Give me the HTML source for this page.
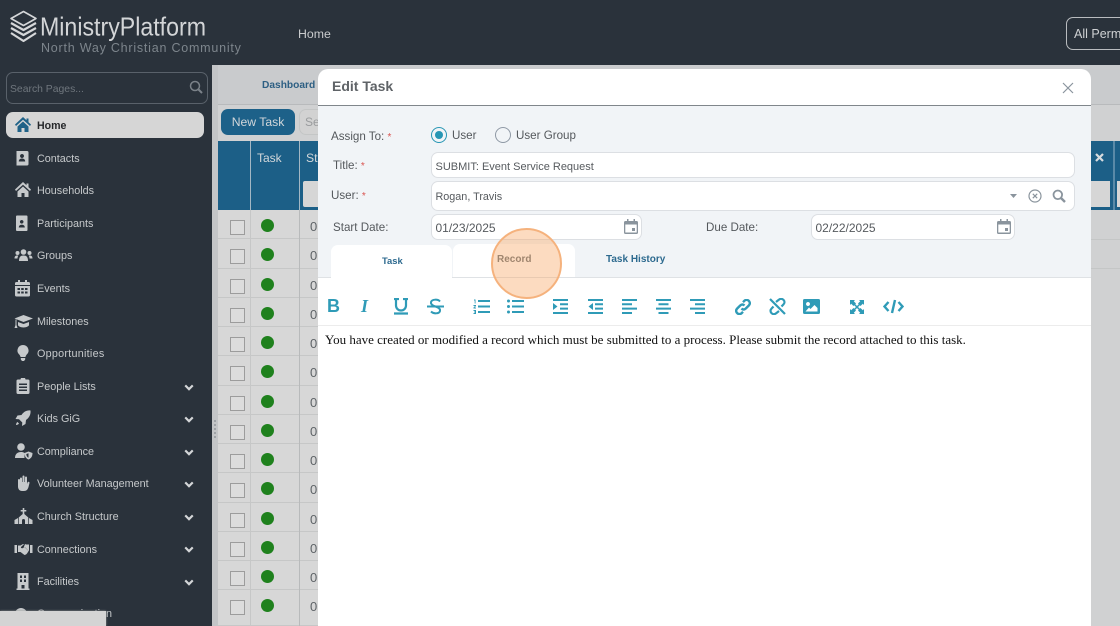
<!DOCTYPE html>
<html><head><meta charset="utf-8"><title>Edit Task</title>
<style>
html,body{margin:0;padding:0}
body{width:1120px;height:626px;overflow:hidden;position:relative;background:#2a323b;font-family:"Liberation Sans",sans-serif;color:#555}
*{box-sizing:border-box}
.a{position:absolute;white-space:nowrap}
.n{position:absolute;left:37px;font-size:10.800px;line-height:16px;color:#c6c9cb;white-space:nowrap;margin-top:1px}
.i{position:absolute;left:14px;width:18px;height:18px;fill:#c6c9cb;margin-top:-1px}
.c{position:absolute;left:184px;width:10px;height:7px;fill:none;stroke:#d4d6d8;stroke-width:2.600}
.r{position:absolute;left:218px;width:100px;height:29.250px;border-bottom:1px solid #c6c7c7;background:#d7d7d7}
.r b{position:absolute;left:11.500px;top:10px;width:15px;height:15px;border:1.500px solid #9c9c9c;background:#dcdcdc}
.r i{position:absolute;left:43px;top:9px;width:13px;height:13px;border-radius:50%;background:#1f811d}
.r u{position:absolute;left:92px;top:9px;font-size:13px;line-height:16px;color:#5f6468;text-decoration:none}
.l{font-size:11.600px;line-height:16px;color:#54585c}
.s{color:#d9534f;font-size:10px}
.f{position:absolute;background:#fff;border:1px solid #dcdfe3;border-radius:7px;font-size:11px;color:#565a5e;line-height:16px;padding-left:3.500px;white-space:nowrap}
.o{fill:none;stroke:#2f9bb7;stroke-width:2}
</style></head><body>

<svg class="a" style="left:9px;top:10px" width="30" height="34" viewBox="0 0 30 34" fill="none" stroke="#d5d7d9" stroke-width="1.600" stroke-linejoin="round"><path d="M14.500 1.500 27 8.500 14.500 15.500 2 8.500Z"/><path d="M2 13 14.500 20 27 13M2 18 14.500 25 27 18M2 23 14.500 31 27 23" stroke-width="2.200"/></svg>
<svg class="a" style="left:40px;top:10px" width="170" height="32"><text x="0" y="25.500" font-family="Liberation Sans" font-size="26" fill="#d3d5d7" textLength="166" lengthAdjust="spacingAndGlyphs">MinistryPlatform</text></svg>
<div class="a" style="left:41px;top:41px;font-size:12.500px;line-height:15px;letter-spacing:.78px;color:#7d858c">North Way Christian Community</div>
<div class="a" style="left:298px;top:26px;font-size:12.300px;line-height:17px;color:#c9cbcd">Home</div>
<div class="a" style="left:1066px;top:17px;width:70px;height:33px;border:1px solid #b9bcbf;border-radius:7px;color:#cfd1d3;font-size:12.500px;line-height:32px;padding-left:7px">All Perm</div>

<div class="a" style="left:6px;top:72px;width:202px;height:32px;border:1px solid #59616a;border-radius:7px;color:#6f767d;font-size:10.400px;line-height:33px;padding-left:3px">Search Pages...</div>
<svg class="a" style="left:189px;top:80px" width="14" height="14" fill="none" stroke="#7b8289" stroke-width="1.500"><circle cx="6" cy="6" r="4.500"/><path d="M9.500 9.500 13 13" stroke-width="2"/></svg>

<div class="a" style="left:6px;top:112px;width:198px;height:26px;border-radius:7px;background:#d6d6d6"></div>
<svg class="i" style="top:117px;fill:#1f6288" viewBox="0 0 18 18"><path d="M9 1 1 8.500 2 10l7-6.300L16 10l1-1.500-2.500-2.300V2.500h-2v1.800ZM3.500 10.500 9 5.500l5.500 5V16h-4v-4h-3v4h-4Z"/></svg>
<div class="n" style="top:117px;color:#26282b;font-weight:bold;font-size:10.600px">Home</div>

<svg class="i" style="top:150px" viewBox="0 0 18 18"><path d="M2.500 2h10.500a1.500 1.500 0 0 1 1.500 1.500V15a1.500 1.500 0 0 1-1.500 1.500H2.500ZM8 5a2 2 0 1 0 .01 0ZM4.800 12.500h6.400c0-2-1.400-3-3.200-3s-3.200 1-3.200 3Z" fill-rule="evenodd"/></svg>
<div class="n" style="top:150px">Contacts</div>
<svg class="i" style="top:182px" viewBox="0 0 18 18"><path d="M9 1 1 8.500 2 10l7-6.300L16 10l1-1.500-2.500-2.300V2.500h-2v1.800ZM3.500 10.500 9 5.500l5.500 5V16h-4v-4h-3v4h-4Z"/></svg>
<div class="n" style="top:182px">Households</div>
<svg class="i" style="top:215px" viewBox="0 0 18 18"><path d="M3 1.500h9.500a1 1 0 0 1 1 1V16a1 1 0 0 1-1 1H3a1 1 0 0 1-1-1V2.500a1 1 0 0 1 1-1ZM7.700 6a1.800 1.800 0 1 0 .01 0ZM4.800 13.500h6c0-1.800-1.300-2.700-3-2.700s-3 .9-3 2.700Z" fill-rule="evenodd"/></svg>
<div class="n" style="top:215px">Participants</div>
<svg class="i" style="top:247px;width:19px" viewBox="0 0 19 18"><circle cx="9.500" cy="6" r="2.800"/><circle cx="3.500" cy="7" r="2"/><circle cx="15.500" cy="7" r="2"/><path d="M5 15c0-4 1.500-5.500 4.500-5.500S14 11 14 15ZM.5 12.500c0-2 1-3 2.500-3h1.300C3.800 10.500 3.500 11.500 3.500 12.500ZM18.500 12.500c0-2-1-3-2.500-3h-1.300c.5 1 .8 2 .8 3Z"/></svg>
<div class="n" style="top:247px">Groups</div>
<svg class="i" style="top:280px" viewBox="0 0 18 18"><path d="M4 1h2v2h5V1h2v2h1.500A1.500 1.500 0 0 1 16 4.500V6H1V4.500A1.500 1.500 0 0 1 2.500 3H4ZM1 7h15v9a1.500 1.500 0 0 1-1.500 1.500h-12A1.500 1.500 0 0 1 1 16ZM3.500 9v2h2.500V9ZM7.200 9v2h2.500V9ZM11 9v2h2.500V9ZM3.500 12.500v2h2.500v-2ZM7.200 12.500v2h2.500v-2ZM11 12.500v2h2.500v-2Z" fill-rule="evenodd"/></svg>
<div class="n" style="top:280px">Events</div>
<svg class="i" style="top:313px;width:19px" viewBox="0 0 19 18"><path d="M9.500 3 19 6.500 9.500 10 .5 6.500ZM4 10l5.500 2 5.500-2v3c0 1-2.500 2.500-5.500 2.500S4 14 4 13ZM1.500 7.500h1V13l1 3h-3l1-3Z"/></svg>
<div class="n" style="top:313px">Milestones</div>
<svg class="i" style="top:345px" viewBox="0 0 18 18"><path d="M9 1a5.500 5.500 0 0 1 4 9.300c-.8.9-1.400 1.800-1.500 2.700h-5c-.1-.9-.7-1.800-1.500-2.700A5.500 5.500 0 0 1 9 1ZM6.800 14h4.400v1.500L10 17H8l-1.200-1.500Z"/></svg>
<div class="n" style="top:345px;letter-spacing:.25px">Opportunities</div>
<svg class="i" style="top:378px" viewBox="0 0 18 18"><path d="M7 1h4l.6 1.500H14a1.500 1.500 0 0 1 1.500 1.500v11.500A1.500 1.500 0 0 1 14 17H4a1.500 1.500 0 0 1-1.500-1.500V4A1.500 1.500 0 0 1 4 2.500h2.400ZM5 6.500V8h8V6.500ZM5 9.500V11h8V9.500ZM5 12.500V14h8v-1.500Z" fill-rule="evenodd"/></svg>
<div class="n" style="top:378px">People Lists</div>
<svg class="i" style="top:410px" viewBox="0 0 18 18"><path d="M16.500 1.500c.5 4-1.500 7.500-4.500 9.500l-.5 4-3.500 2 .3-3.500-3.300-3.300L1.500 10l2-3.500 4-.5c2-3 5-5 9-4.500ZM3.500 13c-1 .5-1.500 2-1.500 3 1 0 2.500-.5 3-1.500Z"/></svg>
<div class="n" style="top:410px">Kids GiG</div>
<svg class="i" style="top:443px;width:19px" viewBox="0 0 19 18"><circle cx="7" cy="5" r="3.800"/><path d="M1 16c0-4 2.500-6 6-6 1.500 0 2.500.3 3.500 1v5Z"/><path d="M14.500 9.500 18.500 11c0 3.500-1.500 5.500-4 6.500-2.500-1-4-3-4-6.500Zm0 1.800-2.200.8c.1 1.900 1 3 2.200 3.700Z" fill-rule="evenodd"/></svg>
<div class="n" style="top:443px">Compliance</div>
<svg class="i" style="top:475px" viewBox="0 0 18 18"><path d="M6 4.500a1 1 0 0 1 2 0V8h.5V2.500a1 1 0 0 1 2 0V8h.5V3.500a1 1 0 0 1 2 0V10l.5-1.500a1 1 0 0 1 2 .5L14.500 13c-.7 2.500-2 4-4.500 4H8c-2.500 0-4-2-4-4.500V6a1 1 0 0 1 2 0Z"/></svg>
<div class="n" style="top:475px">Volunteer Management</div>
<svg class="i" style="top:508px;width:19px" viewBox="0 0 19 18"><path d="M8.700 1h1.600v2h2v1.500h-2V7l4 3.500v6.500H11v-3.500a1.500 1.500 0 0 0-3 0V17H4.700v-6.500l4-3.500V4.500h-2V3h2ZM.5 17v-4l3.500-2v6ZM18.500 17v-4L15 11v6Z"/></svg>
<div class="n" style="top:508px">Church Structure</div>
<svg class="i" style="top:541px;width:19px" viewBox="0 0 19 18"><path d="M.5 5h2.500v8H.5ZM16 5h2.500v8H16ZM4 5.500h2.500L9 4l1 .3-3 2.700c-.5.800.8 1.800 2 1l1.500-1 4 4L14 12l-1 1.500-1 1-1.500.500L6.500 12H4ZM11 4l1 .500H15v6.800l-4.200-4.300-1 .2Z"/></svg>
<div class="n" style="top:541px">Connections</div>
<svg class="i" style="top:573px" viewBox="0 0 18 18"><path d="M3.500 1h11v15.500h1V18H2.500v-1.500h1ZM6 3.500V6h2V3.500ZM10 3.500V6h2V3.500ZM6 7.500V10h2V7.500ZM10 7.500V10h2V7.500ZM7.500 13v3.500h3V13Z" fill-rule="evenodd"/></svg>
<div class="n" style="top:573px">Facilities</div>
<div class="n" style="top:605px">Communication</div>
<div class="a" style="left:15px;top:608px;width:12px;height:12px;border-radius:50%;background:#c6c9cb"></div>

<svg class="c" style="top:384px" viewBox="0 0 12 8"><path d="M1.500 1.500 6 6l4.500-4.500"/></svg>
<svg class="c" style="top:416px" viewBox="0 0 12 8"><path d="M1.500 1.500 6 6l4.500-4.500"/></svg>
<svg class="c" style="top:449px" viewBox="0 0 12 8"><path d="M1.500 1.500 6 6l4.500-4.500"/></svg>
<svg class="c" style="top:481px" viewBox="0 0 12 8"><path d="M1.500 1.500 6 6l4.500-4.500"/></svg>
<svg class="c" style="top:514px" viewBox="0 0 12 8"><path d="M1.500 1.500 6 6l4.500-4.500"/></svg>
<svg class="c" style="top:546px" viewBox="0 0 12 8"><path d="M1.500 1.500 6 6l4.500-4.500"/></svg>
<svg class="c" style="top:579px" viewBox="0 0 12 8"><path d="M1.500 1.500 6 6l4.500-4.500"/></svg>
<div class="a" style="left:0;top:611px;width:106px;height:15px;background:#d4d4d4;box-shadow:0 0 2px #999"></div>

<!-- main -->
<div class="a" style="left:212px;top:65px;width:908px;height:561px;background:#d0d1d2"></div>
<div class="a" style="left:218px;top:65px;width:902px;height:39px;background:#c9cbcd"></div>
<div class="a" style="left:212px;top:65px;width:6px;height:561px;background:#c3c5c7"></div>
<div class="a" style="left:214px;top:420px;width:2px;height:18px;border-left:2px dotted #9ea2a6"></div>
<div class="a" style="left:218px;top:104px;width:902px;height:1px;background:#b8babc"></div>
<div class="a" style="left:262px;top:78px;font-size:10.200px;line-height:16px;font-weight:bold;color:#2d5f83">Dashboard</div>
<div class="a" style="left:221px;top:109px;width:74px;height:26px;border-radius:7px;background:#1d6189;color:#d2d7da;font-size:12.200px;line-height:26px;text-align:center">New Task</div>
<div class="a" style="left:299px;top:109px;width:30px;height:26px;border-radius:7px;border:1px solid #c4c6c6;background:#d2d2d2;color:#9a9c9e;font-size:12px;line-height:25px;padding-left:5px">Se</div>

<div class="a" style="left:218px;top:141px;width:902px;height:69px;background:#1c5f87"></div>
<div class="a" style="left:250px;top:141px;width:1px;height:69px;background:#a3b7c4"></div>
<div class="a" style="left:299px;top:141px;width:1px;height:69px;background:#a3b7c4"></div>
<div class="a" style="left:1113px;top:141px;width:2px;height:69px;background:#5a8aa8"></div>
<div class="a" style="left:257px;top:150px;font-size:12px;line-height:16px;color:#d2d7da">Task</div>
<div class="a" style="left:306px;top:150px;font-size:12.200px;line-height:16px;color:#d2d7da">St</div>
<div class="a" style="left:303px;top:181px;width:20px;height:26px;background:#d6d6d6;border-radius:2px"></div>
<div class="a" style="left:1091px;top:181px;width:19px;height:26px;background:#d6d6d6"></div>
<div class="a" style="left:1117px;top:181px;width:3px;height:26px;background:#d6d6d6"></div>
<svg class="a" style="left:1095px;top:153px" width="9" height="9" stroke="#d8dcdf" stroke-width="2.200"><path d="M1 1 8 8M8 1 1 8"/></svg>

<div class="r" style="top:210px"><b></b><i></i><u>0</u></div>
<div class="r" style="top:239.250px"><b></b><i></i><u>0</u></div>
<div class="r" style="top:268.500px"><b></b><i></i><u>0</u></div>
<div class="r" style="top:297.750px"><b></b><i></i><u>0</u></div>
<div class="r" style="top:327px"><b></b><i></i><u>0</u></div>
<div class="r" style="top:356.250px"><b></b><i></i><u>0</u></div>
<div class="r" style="top:385.500px"><b></b><i></i><u>0</u></div>
<div class="r" style="top:414.750px"><b></b><i></i><u>0</u></div>
<div class="r" style="top:444px"><b></b><i></i><u>0</u></div>
<div class="r" style="top:473.250px"><b></b><i></i><u>0</u></div>
<div class="r" style="top:502.500px"><b></b><i></i><u>0</u></div>
<div class="r" style="top:531.750px"><b></b><i></i><u>0</u></div>
<div class="r" style="top:561px"><b></b><i></i><u>0</u></div>
<div class="r" style="top:590.250px;height:36px"><b></b><i></i><u>0</u></div>
<div class="a" style="left:250px;top:210px;width:1px;height:416px;background:#c6c7c7"></div>
<div class="a" style="left:299px;top:210px;width:1px;height:416px;background:#b8babb"></div>
<div class="a" style="left:1091px;top:239px;width:29px;height:1px;background:#c4c6c6"></div>
<div class="a" style="left:1091px;top:268px;width:29px;height:1px;background:#c4c6c6"></div>

<!-- modal -->
<div class="a" style="left:318px;top:69px;width:773px;height:557px;background:#fff;border-radius:10px 10px 0 0"></div>
<div class="a" style="left:318px;top:105px;width:773px;height:173px;background:#f1f4f7;border-top:1px solid #80868b"></div>
<div class="a" style="left:332px;top:76px;font-size:14px;line-height:20px;font-weight:bold;color:#5f6367">Edit Task</div>
<svg class="a" style="left:1062px;top:82px" width="12" height="12" stroke="#8a949d" stroke-width="1.200"><path d="M1 1 11 11M11 1 1 11"/></svg>

<div class="a l" style="left:331px;top:129px">Assign To: <span class="s">*</span></div>
<div class="a l" style="left:333px;top:158px">Title: <span class="s">*</span></div>
<div class="a l" style="left:331px;top:188px">User: <span class="s">*</span></div>
<div class="a l" style="left:333px;top:220px">Start Date:</div>
<div class="a l" style="left:706px;top:220px">Due Date:</div>

<div class="a" style="left:431px;top:127px;width:16px;height:16px;border-radius:50%;border:1.500px solid #2796b4"></div>
<div class="a" style="left:435px;top:131px;width:8px;height:8px;border-radius:50%;background:#2796b4"></div>
<div class="a l" style="left:452px;top:128px">User</div>
<div class="a" style="left:495px;top:127px;width:16px;height:16px;border-radius:50%;border:1.500px solid #8f99a5"></div>
<div class="a l" style="left:516px;top:128px">User Group</div>

<div class="f" style="left:431px;top:152px;width:644px;height:26px;line-height:28px">SUBMIT: Event Service Request</div>
<div class="f" style="left:431px;top:181px;width:644px;height:30px;line-height:31px;font-size:10.800px">Rogan, Travis</div>
<div class="f" style="left:431px;top:214px;width:211px;height:26px;line-height:27px;font-size:12px">01/23/2025</div>
<div class="f" style="left:811px;top:214px;width:204px;height:26px;line-height:27px;font-size:12px">02/22/2025</div>
<svg class="a" style="left:1010px;top:194px" width="7" height="4" fill="#8a949d"><path d="M0 0h7L3.500 4Z"/></svg>
<svg class="a" style="left:1028px;top:189px" width="14" height="14" fill="none" stroke="#8a949d" stroke-width="1.200"><circle cx="7" cy="7" r="6"/><path d="M4.800 4.800 9.200 9.200M9.200 4.800 4.800 9.200"/></svg>
<svg class="a" style="left:1052px;top:189px" width="14" height="14" fill="none" stroke="#8a949d" stroke-width="1.800"><circle cx="5.800" cy="5.800" r="4.300"/><path d="M9 9 13 13" stroke-width="2.400"/></svg>
<svg class="a" style="left:624px;top:219px" width="14" height="15" fill="#8a949d"><path d="M3 0h1.500v2h5V0H11v2h1.500A1.500 1.500 0 0 1 14 3.500v10a1.500 1.500 0 0 1-1.500 1.500h-11A1.500 1.500 0 0 1 0 13.500v-10A1.500 1.500 0 0 1 1.500 2H3ZM1.300 5.500v8h11.400v-8ZM8 9h3v3H8Z" fill-rule="evenodd"/></svg>
<svg class="a" style="left:997px;top:219px" width="14" height="15" fill="#8a949d"><path d="M3 0h1.500v2h5V0H11v2h1.500A1.500 1.500 0 0 1 14 3.500v10a1.500 1.500 0 0 1-1.500 1.500h-11A1.500 1.500 0 0 1 0 13.500v-10A1.500 1.500 0 0 1 1.500 2H3ZM1.300 5.500v8h11.400v-8ZM8 9h3v3H8Z" fill-rule="evenodd"/></svg>

<!-- tabs -->
<div class="a" style="left:331px;top:245px;width:121px;height:33px;background:#fff;border-radius:7px 7px 0 0"></div>
<div class="a" style="left:453px;top:244px;width:122px;height:33px;background:#fff;border-radius:7px 7px 0 0"></div>
<div class="a" style="left:318px;top:277px;width:773px;height:1px;background:#dfe2e5"></div>
<div class="a" style="left:331px;top:277px;width:121px;height:2px;background:#fff"></div>
<div class="a" style="left:382px;top:253px;font-size:9.400px;line-height:15px;font-weight:bold;color:#2d6a8f">Task</div>
<div class="a" style="left:497px;top:252px;font-size:10px;line-height:15px;font-weight:bold;color:#5f6b72">Record</div>
<div class="a" style="left:606px;top:252px;font-size:10px;line-height:15px;font-weight:bold;color:#2d6a8f">Task History</div>
<div class="a" style="left:491px;top:228px;width:71px;height:71px;border-radius:50%;background:rgba(248,170,105,.42);border:2.500px solid #f5b27d"></div>

<!-- toolbar -->
<div class="a" style="left:327px;top:296px;font:bold 18px/21px 'Liberation Sans',sans-serif;color:#2f9bb7">B</div>
<div class="a" style="left:361px;top:296px;font:italic bold 18px/21px 'Liberation Serif',serif;color:#2f9bb7">I</div>
<svg class="a" style="left:393px;top:298px" width="16" height="17" fill="none" stroke="#2f9bb7" stroke-width="2.200"><path d="M3 1v6.500a5 5 0 0 0 10 0V1M1 1h5M10 1h5M1 15.500h14"/></svg>
<svg class="a" style="left:427px;top:298px" width="17" height="17" fill="none" stroke="#2f9bb7" stroke-width="2"><path d="M13 3.500C11 1 5 1 4 4c-.5 2 1.500 3.500 4.500 4.500 3 1 5 2.500 4.500 4.500-.8 3-6.500 3-9 .5M0 8.500h17"/></svg>
<svg class="a" style="left:473px;top:299px" width="17" height="15" fill="#2f9bb7"><path d="M5 1h12v2H5ZM5 6.500h12v2H5ZM5 12h12v2H5ZM1 .5h1.500v4H1.700V1.500H1ZM.5 6h2.500v1L1.500 8.500H3v1H.5v-1L2 7H.5ZM.5 11H3v4H.5v-1H2v-.5H1v-1h1V12H.5Z"/></svg>
<svg class="a" style="left:507px;top:299px" width="17" height="15" fill="#2f9bb7"><circle cx="1.500" cy="2" r="1.500"/><circle cx="1.500" cy="7.500" r="1.500"/><circle cx="1.500" cy="13" r="1.500"/><path d="M5 1h12v2H5ZM5 6.500h12v2H5ZM5 12h12v2H5Z"/></svg>
<svg class="a" style="left:553px;top:299px" width="15" height="15" fill="#2f9bb7"><path d="M0 0h15v2H0ZM7 4.300h8v2H7ZM7 8.600h8v2H7ZM0 13h15v2H0ZM0 4l4.500 3.500L0 11Z"/></svg>
<svg class="a" style="left:588px;top:299px" width="15" height="15" fill="#2f9bb7"><path d="M0 0h15v2H0ZM7 4.300h8v2H7ZM7 8.600h8v2H7ZM0 13h15v2H0ZM5 4 .5 7.500 5 11Z"/></svg>
<svg class="a" style="left:622px;top:299px" width="15" height="15" fill="#2f9bb7"><path d="M0 0h15v2H0ZM0 4.300h10v2H0ZM0 8.600h15v2H0ZM0 13h10v2H0Z"/></svg>
<svg class="a" style="left:656px;top:299px" width="15" height="15" fill="#2f9bb7"><path d="M0 0h15v2H0ZM2.500 4.300h10v2h-10ZM0 8.600h15v2H0ZM2.500 13h10v2h-10Z"/></svg>
<svg class="a" style="left:690px;top:299px" width="15" height="15" fill="#2f9bb7"><path d="M0 0h15v2H0ZM5 4.300h10v2H5ZM0 8.600h15v2H0ZM5 13h10v2H5Z"/></svg>
<svg class="a" style="left:735px;top:299px" width="16" height="16" fill="none" stroke="#2f9bb7" stroke-width="2.400"><path d="M6.500 9.500c1.500 1.500 3 1.200 4.300 0l3-3c1.500-1.500 1.300-3.400 0-4.600-1.300-1.300-3.200-1.300-4.500 0L8 3.200"/><path d="M9.500 6.500c-1.500-1.500-3-1.200-4.300 0l-3 3c-1.500 1.500-1.300 3.400 0 4.600 1.300 1.300 3.200 1.300 4.500 0L8 12.800"/></svg>
<svg class="a" style="left:769px;top:298px" width="17" height="17" fill="none" stroke="#2f9bb7" stroke-width="2.200"><path d="M1 1 16 16"/><path d="M7 4 9.800 1.800c1.500-1.300 3.400-1.200 4.700.1s1.300 3.200 0 4.500L12.500 8.500"/><path d="M10 13l-2.800 2.200c-1.500 1.300-3.400 1.200-4.700-.1s-1.300-3.200 0-4.500L4.500 8.500"/></svg>
<svg class="a" style="left:803px;top:299px" width="17" height="15"><path fill="#2f9bb7" fill-rule="evenodd" d="M1.500 0h14A1.500 1.500 0 0 1 17 1.500v12a1.500 1.500 0 0 1-1.500 1.500h-14A1.500 1.500 0 0 1 0 13.500v-12A1.500 1.500 0 0 1 1.500 0ZM5 3a2 2 0 1 0 .01 0ZM2.500 12.500h12V9l-3-3-4 4L6 8.500Z"/></svg>
<svg class="a" style="left:850px;top:300px" width="14" height="14" fill="#2f9bb7"><path d="M0 0h5L3.800 1.200 6 3.500 3.500 6 1.200 3.800 0 5ZM14 0H9l1.200 1.200L8 3.500 10.500 6l2.300-2.200L14 5ZM0 14h5l-1.200-1.200L6 10.500 3.500 8l-2.300 2.200L0 9ZM14 14H9l1.200-1.200L8 10.500 10.500 8l2.300 2.200L14 9Z"/><path d="M4 4 10 10M10 4 4 10" stroke="#2f9bb7" stroke-width="1.500"/></svg>
<svg class="a" style="left:883px;top:299px" width="21" height="15" fill="none" stroke="#2f9bb7" stroke-width="2.400"><path d="M5.500 3 1.500 7.500l4 4.500M15.500 3l4 4.500-4 4.500M12 1 9 14"/></svg>
<div class="a" style="left:318px;top:325px;width:773px;height:1px;background:#ececec"></div>
<div class="a" style="left:325px;top:332px;font:13px/16px 'Liberation Serif',serif;color:#111">You have created or modified a record which must be submitted to a process. Please submit the record attached to this task.</div>
</body></html>
